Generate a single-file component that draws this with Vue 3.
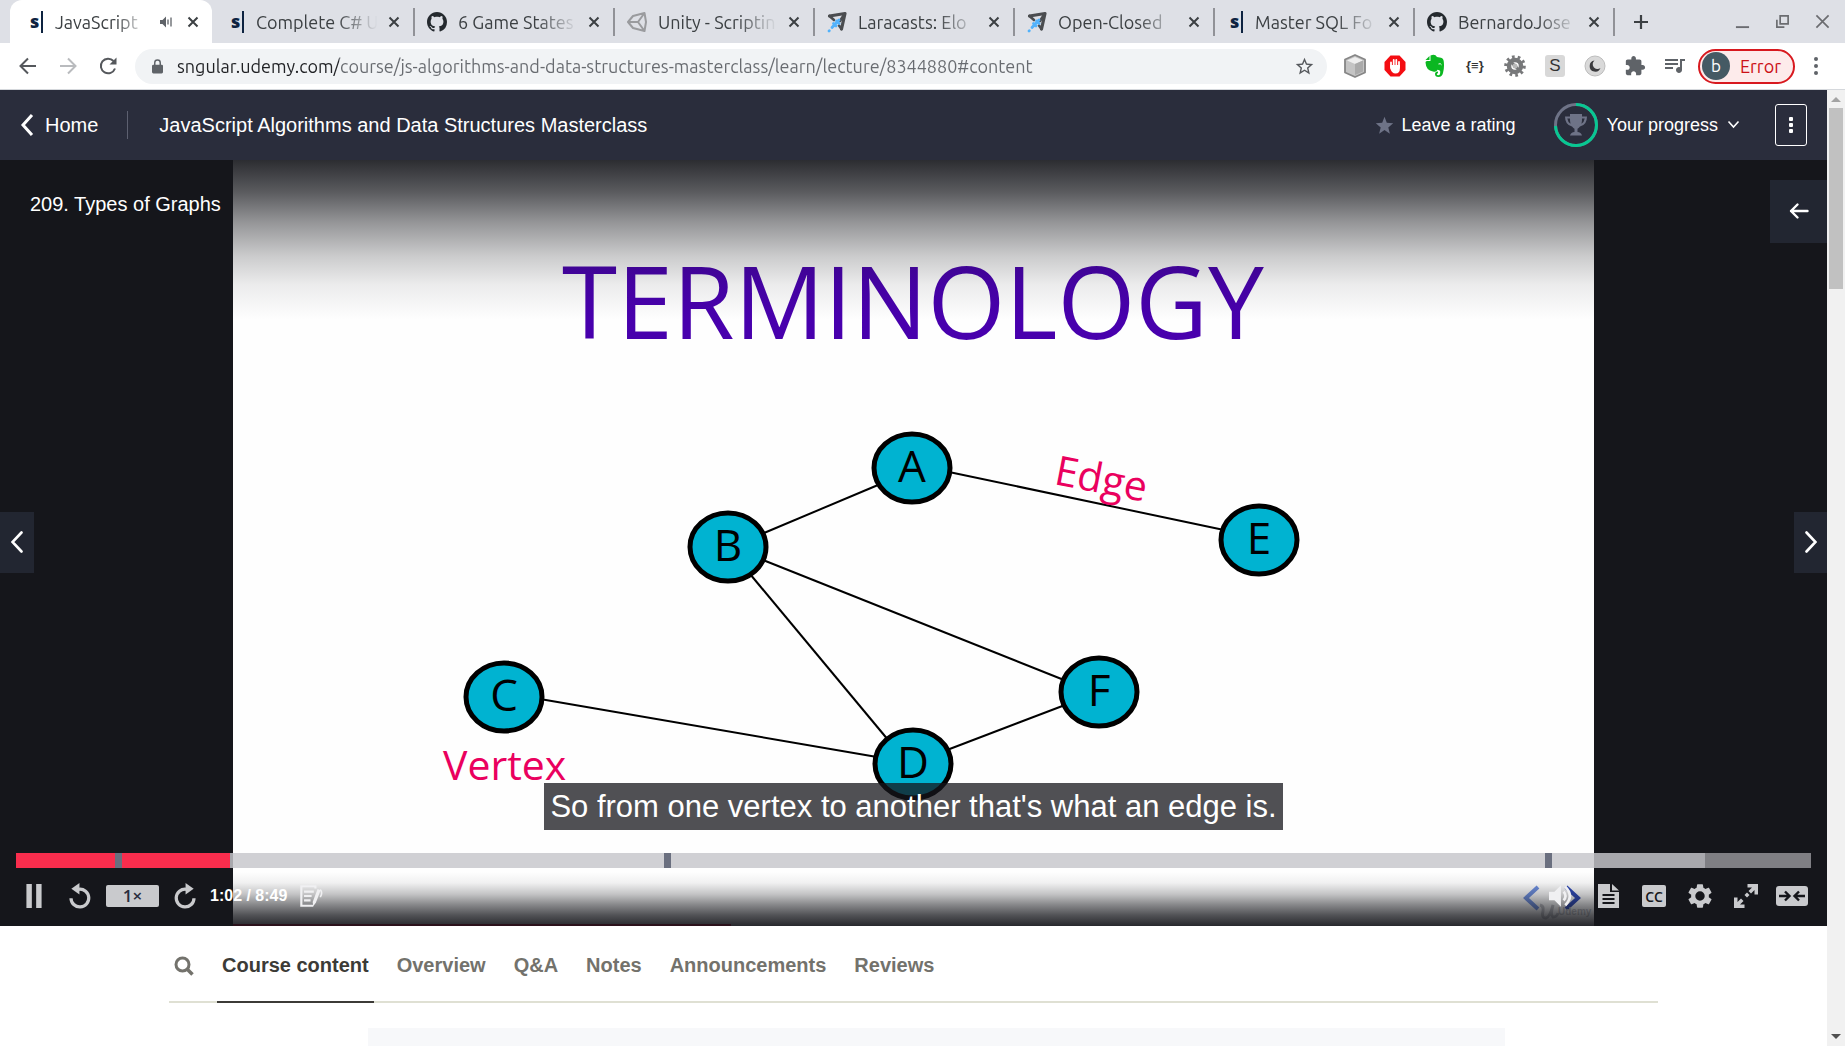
<script setup>
import { ref } from 'vue'

const tabs = [
  { title: 'JavaScript', icon: 'sngular', active: true, audible: true },
  { title: 'Complete C# U', icon: 'sngular' },
  { title: '6 Game States', icon: 'github' },
  { title: 'Unity - Scriptin', icon: 'unity' },
  { title: 'Laracasts: Elo', icon: 'plane' },
  { title: 'Open-Closed', icon: 'plane' },
  { title: 'Master SQL Fo', icon: 'sngular' },
  { title: 'BernardoJose', icon: 'github' },
]

const url = ref('sngular.udemy.com/course/js-algorithms-and-data-structures-masterclass/learn/lecture/8344880#content')

const nodes = [
  { name: 'A', x: 679, y: 308 },
  { name: 'B', x: 495, y: 387 },
  { name: 'C', x: 271, y: 537 },
  { name: 'D', x: 680, y: 604 },
  { name: 'E', x: 1026, y: 380 },
  { name: 'F', x: 866, y: 532 },
]
const edges = [
  { key: 'AB', from: [645, 325], to: [531, 373] },
  { key: 'AE', from: [716, 312], to: [991, 370] },
  { key: 'BF', from: [530, 400], to: [831, 520] },
  { key: 'BD', from: [517, 414], to: [656, 581] },
  { key: 'CD', from: [307, 539], to: [644, 597] },
  { key: 'DF', from: [714, 590], to: [832, 545] },
]

const position = ref(62)
const duration = 529
const played = 11.9
const buffered = 94.1
const bookmarks = [5.5, 36.1, 85.2]

const sections = ['Course content', 'Overview', 'Q&A', 'Notes', 'Announcements', 'Reviews']
const current = ref('Course content')
</script>

<template>
  <div class="browser">
    <div class="tabstrip">
      <div v-for="tab in tabs" :key="tab.title" class="tab" :class="{ active: tab.active }">
        <span v-if="tab.icon === 'sngular'" class="fav fav-s">s</span>
        <svg v-else-if="tab.icon === 'github'" class="fav" viewBox="0 0 16 16" fill="#24292e">
          <path d="M8 0C3.58 0 0 3.58 0 8c0 3.54 2.29 6.53 5.47 7.59.4.07.55-.17.55-.38 0-.19-.01-.82-.01-1.49-2.01.37-2.53-.49-2.69-.94-.09-.23-.48-.94-.82-1.13-.28-.15-.68-.52-.01-.53.63-.01 1.08.58 1.23.82.72 1.21 1.87.87 2.33.66.07-.52.28-.87.51-1.07-1.78-.2-3.64-.89-3.64-3.95 0-.87.31-1.59.82-2.15-.08-.2-.36-1.02.08-2.12 0 0 .67-.21 2.2.82.64-.18 1.32-.27 2-.27s1.36.09 2 .27c1.53-1.04 2.2-.82 2.2-.82.44 1.1.16 1.92.08 2.12.51.56.82 1.27.82 2.15 0 3.07-1.87 3.75-3.65 3.95.29.25.54.73.54 1.48 0 1.07-.01 1.93-.01 2.2 0 .21.15.46.55.38A8.01 8.01 0 0 0 16 8c0-4.42-3.58-8-8-8z" />
        </svg>
        <svg v-else-if="tab.icon === 'unity'" class="fav" viewBox="0 0 20 20" fill="none" stroke="#9a9b9e" stroke-width="2" stroke-linejoin="round">
          <path d="M1 10 6 4 17.500 1 19 10 17.500 19 6 16ZM1 10H11M11 10l6.500-9M11 10l6.500 9" />
        </svg>
        <svg v-else class="fav" viewBox="0 0 20 20" fill="none">
          <path d="M2.500 4 18 1.500 14.500 17" stroke="#4b4d50" stroke-width="3.200" stroke-linejoin="round" stroke-linecap="round" />
          <path d="M2.500 4 7 8M14.500 17 12 13.500M17.500 2 13 9" stroke="#4b4d50" stroke-width="2.600" stroke-linecap="round" />
          <path d="M12 8 5 15.500M6.500 11.500l2.500 2.500M9.500 9l2.500 2.500M2 19l.3-.3" stroke="#52b2fb" stroke-width="2.800" stroke-linecap="round" />
        </svg>
        <span class="tab-title">{{ tab.title }}</span>
        <svg v-if="tab.audible" class="audible" viewBox="0 0 14 14" fill="#5f6368">
          <path d="M1 5h2.500L7 1.500v11L3.500 9H1z" />
          <path d="M9 4.500v5M12 2.500v9" stroke="#5f6368" stroke-width="1.300" />
        </svg>
        <button class="tab-close" aria-label="Close tab">
          <svg viewBox="0 0 12 12"><path d="M1.500 1.500l9 9M10.500 1.500l-9 9" stroke="#3c4043" stroke-width="2" /></svg>
        </button>
      </div>
      <button class="new-tab" aria-label="New tab">
        <svg viewBox="0 0 16 16"><path d="M8 1v14M1 8h14" stroke="#3c4043" stroke-width="2.200" /></svg>
      </button>
      <div class="window-buttons">
        <button aria-label="Minimize"><svg viewBox="0 0 16 16"><path d="M1 14h14" stroke="#6b6c70" stroke-width="2" /></svg></button>
        <button aria-label="Restore"><svg viewBox="0 0 16 16" fill="none" stroke="#6b6c70" stroke-width="1.800"><path d="M5.500 2H14v8.500H5.500zM2 6v8h8" /></svg></button>
        <button aria-label="Close window"><svg viewBox="0 0 16 16"><path d="M1.500 1.500l13 13M14.500 1.500l-13 13" stroke="#6b6c70" stroke-width="1.800" /></svg></button>
      </div>
    </div>

    <div class="toolbar">
      <button class="nav-btn" aria-label="Back"><svg viewBox="0 0 20 20" fill="none" stroke="#55585c" stroke-width="2"><path d="M18 10H3M10 2.500 2.500 10l7.500 7.500" /></svg></button>
      <button class="nav-btn" aria-label="Forward"><svg viewBox="0 0 20 20" fill="none" stroke="#b9bbbe" stroke-width="2"><path d="M2 10h15M10 2.500 17.500 10 10 17.500" /></svg></button>
      <button class="nav-btn" aria-label="Reload"><svg viewBox="0 0 20 20" fill="none" stroke="#55585c" stroke-width="2"><path d="M17 12.500A7.300 7.300 0 1 1 15.500 5" /><path d="M18.500 1.500v7h-7z" fill="#55585c" stroke="none" /></svg></button>
      <div class="omnibox">
        <svg class="lock" viewBox="0 0 12 16"><rect y="6" width="12" height="9.500" rx="1.500" fill="#5f6368" /><path d="M3 6.500V4a3 3 0 0 1 6 0v2.500" fill="none" stroke="#5f6368" stroke-width="1.600" /></svg>
        <input v-model="url" class="url" type="text" aria-label="Address" spellcheck="false" />
        <button class="bookmark" aria-label="Bookmark this page"><svg viewBox="0 0 24 24" fill="#55585c"><path d="M22 9.240l-7.190-.62L12 2 9.190 8.630 2 9.240l5.460 4.730L5.820 21 12 17.270 18.180 21l-1.630-7.030L22 9.240zM12 15.400l-3.760 2.270 1-4.280-3.320-2.880 4.380-.38L12 6.100l1.710 4.040 4.380.38-3.320 2.880 1 4.280L12 15.400z" /></svg></button>
      </div>
      <div class="extensions">
        <button aria-label="Cube"><svg viewBox="0 0 22 24"><path d="M11 1 21 5.500v13L11 23 1 18.500v-13z" fill="#c4c4c4" stroke="#868686" stroke-width="1.800" stroke-linejoin="round" /><path d="M3 6.500 11 3l8 3.500-8 3.500z" fill="#eee" /><path d="M11 10l8-3.500v11L11 21z" fill="#aaa" /></svg></button>
        <button aria-label="Ad blocker"><svg viewBox="0 0 22 24"><path d="M6.500 1.500h9L21.500 8v8l-6 6.500h-9L.5 16V8z" fill="#f40d12" /><path d="M7 13V8.500M9.700 12V6M12.300 12V6M15 13V8" stroke="#fff" stroke-width="1.800" stroke-linecap="round" /><path d="M6.200 11h9.700v3.500q0 5-4.500 5-3.500 0-5.200-5z" fill="#fff" /></svg></button>
        <button aria-label="Web clipper"><svg viewBox="0 0 22 24"><path d="M6.500 1.500Q11-.5 13 3l4 .8q2.500.5 2.800 4 .7 6-.8 11.200Q18 23 14.500 23t-3.500-3q0-2.500 3-2.500v1.800q-1.200 0-1.200.9 0 1 1.600 1 2 0 1.800-4-.2-1.500-2.700-1.500-1 3-4.500 1.800Q2 16.500 1.500 8.500 1.500 7 3 7h3.500z" fill="#0bb721" /><path d="M1.500 6 5.500 2v4z" fill="#0bb721" /><path d="M14.500 10q2-1 3 .8" stroke="#fff" fill="none" /></svg></button>
        <button class="braces" aria-label="JSON viewer">{≡}</button>
        <button aria-label="Debugger"><svg viewBox="0 0 22 22"><circle cx="11" cy="11" r="6" fill="none" stroke="#77787a" stroke-width="4.500" /><circle cx="11" cy="11" r="9" fill="none" stroke="#77787a" stroke-width="3.600" stroke-dasharray="2.600 3" /><path d="M6 6l10 10" stroke="#77787a" stroke-width="3" /><circle cx="11" cy="11" r="2.500" fill="#b8b8b8" /></svg></button>
        <button class="stylus" aria-label="Styles">S</button>
        <button aria-label="Dark mode"><svg viewBox="0 0 22 22"><circle cx="11" cy="11" r="10" fill="#d9d9d9" stroke="#bdbdbd" /><path d="M10.500 5.500a5.600 5.600 0 1 0 6 7.500 4.700 4.700 0 0 1-6-7.500z" fill="#3b3b3e" /></svg></button>
        <button aria-label="Extensions"><svg viewBox="0 0 24 24" fill="#5f6368"><path d="M20.500 11H19V7c0-1.100-.9-2-2-2h-4V3.500C13 2.120 11.880 1 10.500 1S8 2.120 8 3.500V5H4c-1.100 0-1.990.9-1.990 2v3.800H3.500c1.490 0 2.700 1.210 2.700 2.700s-1.210 2.700-2.700 2.700H2V20c0 1.100.9 2 2 2h3.800v-1.500c0-1.490 1.210-2.700 2.700-2.700 1.490 0 2.700 1.210 2.700 2.700V22H17c1.100 0 2-.9 2-2v-4h1.500c1.380 0 2.500-1.120 2.500-2.500S21.880 11 20.500 11z" /></svg></button>
        <button aria-label="Media control"><svg viewBox="1 2 22 22" fill="#5f6368"><path d="M15 6H2v2h13V6zm0 4H2v2h13v-2zM2 16h8v-2H2v2zM17 6v8.180c-.31-.11-.65-.18-1-.18-1.660 0-3 1.340-3 3s1.340 3 3 3 3-1.340 3-3V8h3V6h-5z" /></svg></button>
      </div>
      <button class="profile"><span class="avatar">b</span>Error</button>
      <button class="menu" aria-label="Browser menu"><i></i><i></i><i></i></button>
    </div>

    <div class="viewport">
      <div class="page">
        <header class="course-bar">
          <a class="home" href="#home">
            <svg viewBox="0 0 14 24" fill="none" stroke="#fff" stroke-width="3"><path d="M12 2 3 12l9 10" /></svg>Home
          </a>
          <span class="rule"></span>
          <a class="course-name" href="#course">JavaScript Algorithms and Data Structures Masterclass</a>
          <button class="rating">
            <svg viewBox="0 0 24 24" fill="#6e7387"><path d="M12 17.800 5.200 22.300l2-7.900L1 9.100l8.100-.5L12 1l2.900 7.600 8.100.5-6.200 5.300 2 7.900z" /></svg>Leave a rating
          </button>
          <button class="progress">
            <svg class="ring" viewBox="0 0 44 44" fill="none">
              <circle cx="22" cy="22" r="20.500" stroke="#6e7387" stroke-width="3" />
              <path d="M22 1.500A20.500 20.500 0 1 1 1.500 23" stroke="#08c792" stroke-width="3" />
              <path d="M16 11h12v2.500h5q0 8.500-7 10-1.500 2-2.500 2.200V29q3.500 0 4.500 3.500H16q1-3.500 4.500-3.500v-3.300q-1-.2-2.500-2.200-7-1.500-7-10h5zM13.300 15.500q.7 4 3.200 5.300-.6-2.500-.5-5.300zM30.700 15.500H28q.1 2.800-.5 5.300 2.500-1.300 3.200-5.300z" fill="#6e7387" fill-rule="evenodd" />
            </svg>
            Your progress
            <svg class="chev" viewBox="0 0 12 12" fill="none" stroke="#fff" stroke-width="1.600"><path d="M1 2.500 6 8l5-5.500" /></svg>
          </button>
          <button class="more" aria-label="More options"><i></i><i></i><i></i></button>
        </header>

        <main class="player">
          <svg class="slide" viewBox="0 0 1361 766">
            <rect width="1361" height="766" fill="#fefefe" />
            <text class="slide-title" x="680" y="179">TERMINOLOGY</text>
            <line v-for="e in edges" :key="e.key" :x1="e.from[0]" :y1="e.from[1]" :x2="e.to[0]" :y2="e.to[1]" stroke="#000" stroke-width="2" />
            <g v-for="n in nodes" :key="n.name">
              <ellipse :cx="n.x" :cy="n.y" rx="38" ry="34" fill="#00b3d1" stroke="#000" stroke-width="5" />
              <text class="node-name" :x="n.x" :y="n.y + 14">{{ n.name }}</text>
            </g>
            <text class="note" x="210" y="620">Vertex</text>
            <text class="note" transform="translate(820 324) rotate(11)">Edge</text>
            <path d="M1305 727l-12 11 12 11" fill="none" stroke="#6d8fe0" stroke-width="4" />
            <path d="M1333 727l12 11-12 11" fill="none" stroke="#2b47b8" stroke-width="4" />
            <path d="M1307 745q4 1 3 6-2 7 3 7 4-1 7-13-3 10 0 12 4 0 5-4" fill="none" stroke="#c4c5c9" stroke-width="3" />
            <text class="mark" x="1325" y="755">Udemy</text>
          </svg>
          <div class="shade-top"></div>
          <div class="shade-bottom"></div>

          <h1 class="lecture">209. Types of Graphs</h1>
          <button class="side open" aria-label="Open course content"><svg viewBox="0 0 20 20" fill="none" stroke="#fff" stroke-width="2.400" stroke-linecap="round" stroke-linejoin="round"><path d="M18.500 10H2M8.500 3.500 2 10l6.500 6.500" /></svg></button>
          <button class="side prev" aria-label="Previous lecture"><svg viewBox="0 0 12 22" fill="none" stroke="#fff" stroke-width="2.600" stroke-linecap="round"><path d="M10.500 1.500 1.500 11l9 9.500" /></svg></button>
          <button class="side next" aria-label="Next lecture"><svg viewBox="0 0 12 22" fill="none" stroke="#fff" stroke-width="2.600" stroke-linecap="round"><path d="M1.500 1.500l9 9.500-9 9.500" /></svg></button>

          <div class="overlay">
            <p class="caption">So from one vertex to another that's what an edge is.</p>
            <div class="seek">
              <span class="buffered" :style="{ width: buffered + '%' }"></span>
              <span class="played" :style="{ width: played + '%' }"></span>
              <span v-for="b in bookmarks" :key="b" class="bookmark-pin" :style="{ left: b + '%' }"></span>
              <input v-model="position" type="range" min="0" :max="duration" aria-label="Seek" />
            </div>
            <div class="controls">
              <button aria-label="Pause"><svg viewBox="0 0 24 24"><path d="M5 1h5v22H5zM14 1h5v22h-5z" /></svg></button>
              <button aria-label="Rewind"><svg class="line" viewBox="0 0 24 24"><path d="M11 5.800a8.200 8.200 0 1 1-7.300 8.200" /><path d="M11.500 0v10.500L4 5.300z" fill="#c9cacd" stroke="none" /></svg></button>
              <button class="rate">1×</button>
              <button aria-label="Forward"><svg class="line" viewBox="0 0 24 24"><path d="M13 5.800a8.200 8.200 0 1 0 7.300 8.200" /><path d="M12.500 0v10.500L20 5.300z" fill="#c9cacd" stroke="none" /></svg></button>
              <span class="time">1:02 / 8:49</span>
              <button class="light" aria-label="Add note"><svg viewBox="0 0 24 24"><path d="M17 5V3H4v18h11M6.500 8h9M6.500 12h7M6.500 16h6" fill="none" stroke="#f0f0f2" stroke-width="2" /><path d="M14.500 17.500 19 5.500l2.800 1.200L17.500 18 15 21.500z" /><path d="M21.500 6q2.500 3 0 7" fill="none" stroke="#f0f0f2" stroke-width="1.500" /></svg></button>
              <span class="grow"></span>
              <button class="light" aria-label="Mute"><svg viewBox="0 0 24 24"><path d="M0 8h5l6-6v20l-6-6H0z" /><path d="M13.500 8q3.500 4 0 8M15 3.500q8.500 8.500 0 17" fill="none" stroke="#f0f0f2" stroke-width="2.400" /></svg></button>
              <button aria-label="Transcript"><svg viewBox="0 0 24 26"><path d="M2 1h12v8h9v16H2zM16 1l7 6.500h-7z" /><path d="M6.500 12h12M6.500 16h12M6.500 20h12" stroke="#15161b" stroke-width="1.800" /></svg></button>
              <button aria-label="Captions"><svg viewBox="0 0 26 24"><rect x="1" y="1" width="24" height="22" rx="2" /><text class="cc" x="13" y="18">CC</text></svg></button>
              <button aria-label="Settings"><svg viewBox="1 1 22 22"><path d="M19.430 12.980c.04-.32.07-.64.07-.98s-.03-.66-.07-.98l2.110-1.650c.19-.15.24-.42.12-.64l-2-3.460c-.12-.22-.39-.3-.61-.22l-2.490 1c-.52-.4-1.080-.73-1.690-.98l-.38-2.650C14.460 2.180 14.250 2 14 2h-4c-.25 0-.46.18-.49.42l-.38 2.650c-.61.25-1.170.59-1.690.98l-2.490-1c-.23-.09-.49 0-.61.22l-2 3.460c-.13.22-.07.49.12.64l2.110 1.650c-.04.32-.07.65-.07.98s.03.66.07.98l-2.110 1.650c-.19.15-.24.42-.12.64l2 3.460c.12.22.39.3.61.22l2.490-1c.52.4 1.080.73 1.690.98l.38 2.650c.03.24.24.42.49.42h4c.25 0 .46-.18.49-.42l.38-2.650c.61-.25 1.170-.59 1.690-.98l2.490 1c.23.09.49 0 .61-.22l2-3.460c.12-.22.07-.49-.12-.64l-2.110-1.650zM12 16a4 4 0 1 1 0-8 4 4 0 0 1 0 8z" /></svg></button>
              <button aria-label="Full screen"><svg viewBox="0 0 26 26"><path d="M14.500 1H25v10.500h-3.500V7L18 10.500 15.500 8 19 4.500h-4.500zM11.500 25H1V14.500h3.500V19L8 15.500l2.500 2.500L7 21.500h4.500zM11.500 12l2.500 2.500 2.500-2.500L14 9.500z" /></svg></button>
              <button class="wide" aria-label="Theater mode"><svg viewBox="0 0 32 20"><rect x="0" y="0" width="32" height="20" rx="3" /><path d="M3 10h10M9 5.500l4.500 4.500L9 14.500M29 10H19M23 5.500 18.500 10l4.500 4.500" fill="none" stroke="#15161b" stroke-width="2.400" /></svg></button>
            </div>
          </div>
          <div class="loaded"></div>
        </main>

        <nav class="sections">
          <button class="search" aria-label="Search course"><svg viewBox="0 0 20 20" fill="none" stroke="#73726c" stroke-width="3"><circle cx="8.500" cy="8.500" r="6.500" /><path d="M13 13l5.500 5.500" stroke-width="3.600" /></svg></button>
          <a v-for="s in sections" :key="s" :href="'#' + s" :class="{ on: s === current }" @click.prevent="current = s">{{ s }}</a>
        </nav>
        <section class="panel"></section>
      </div>
      <div class="scrollbar">
        <svg viewBox="0 0 18 18"><path d="M4 12l5-5 5 5z" fill="#a3a3a3" /></svg>
        <span class="thumb"></span>
        <svg class="down" viewBox="0 0 18 18"><path d="M4 6l5 5 5-5z" fill="#505050" /></svg>
      </div>
    </div>
  </div>
</template>

<style>
body { margin: 0; background: #fff; }
</style>

<style scoped>
.browser { min-height: 100vh; display: flex; flex-direction: column; font-family: "Liberation Sans", Arial, sans-serif; color: #fff; overflow: hidden; }
button { border: 0; background: none; padding: 0; margin: 0; font: inherit; color: inherit; display: flex; align-items: center; justify-content: center; flex: none; }
svg { display: block; flex: none; }
a { color: inherit; text-decoration: none; }

.tabstrip { height: 43px; background: #dee0e6; display: flex; align-items: center; padding-left: 14px; box-sizing: border-box; font-family: Ubuntu, "Noto Sans", sans-serif; font-size: 18px; color: #3c4043; }
.tab { width: 200px; height: 28px; box-sizing: border-box; padding: 0 13px 0 12px; display: flex; align-items: center; border-right: 2px solid #919297; }
.tab.active { width: 202px; height: 43px; margin: 0 0 0 -4px; padding: 0 13px 0 17px; background: #fff; border: 0; border-radius: 12px 12px 0 0; }
.tab.active + .tab { width: 203px; padding-left: 16px; }
.fav { width: 20px; height: 24px; margin-right: 11px; flex: none; }
.fav-s { width: 13px; height: 22px; margin-right: 12px; margin-left: 3px; box-sizing: border-box; border-right: 2px solid #0d2340; font: 800 18px/20px "Open Sans", sans-serif; color: #0d2340; }
.tab-title { flex: 1; min-width: 0; white-space: nowrap; line-height: 26px; mask-image: linear-gradient(to right, #000 65%, transparent 98%); }
.audible { width: 14px; height: 14px; margin: 0 14px 0 10px; }
.tab-close { margin-left: 8px; }
.audible + .tab-close { margin-left: 0; }
.tab-close svg { width: 12px; height: 12px; }
.new-tab { margin-left: 18px; }
.new-tab svg { width: 16px; height: 16px; }
.window-buttons { margin-left: auto; display: flex; padding-right: 3px; }
.window-buttons button { width: 40px; }
.window-buttons svg { width: 15px; height: 15px; }

.toolbar { height: 47px; box-sizing: border-box; padding: 0 8px; background: #fff; border-bottom: 1px solid #d5d8dc; display: flex; align-items: center; font-family: Ubuntu, "Noto Sans", sans-serif; }
.nav-btn { width: 40px; }
.nav-btn svg { width: 20px; height: 20px; }
.omnibox { flex: 1; height: 35px; margin-left: 7px; border-radius: 18px; background: #f1f3f5; display: flex; align-items: center; padding: 0 12px 0 17px; }
.lock { width: 11px; height: 15px; }
.url { flex: 1; min-width: 0; border: 0; outline: 0; margin-left: 14px; padding: 0; font: 18px/26px Ubuntu, "Noto Sans", sans-serif; color: transparent; background: linear-gradient(to right, #202124 162px, #686b70 0); background-clip: text; -webkit-background-clip: text; }
.bookmark svg { width: 21px; height: 21px; }
.extensions { display: flex; margin-left: 8px; }
.extensions button { width: 40px; height: 26px; }
.extensions svg { width: 22px; height: 24px; }
.extensions .braces { color: #333; font: bold 13px/24px "Liberation Sans", sans-serif; }
.extensions .stylus { width: 20px; height: 22px; margin: 2px 10px; border-radius: 3px; background: #d8d8d8; color: #333; font: 17px/22px "Liberation Sans", sans-serif; }
.profile { height: 35px; box-sizing: border-box; margin-left: 3px; padding: 0 12px 0 2px; gap: 10px; border: 2px solid #d8191f; border-radius: 18px; background: #fdebeb; color: #cc1016; font-size: 18px; }
.avatar { width: 28px; height: 28px; border-radius: 50%; background: #455a64; color: #fff; font-size: 17px; line-height: 27px; text-align: center; }
.menu { width: 42px; height: 26px; flex-direction: column; gap: 3px; }
.menu i { width: 4px; height: 4px; border-radius: 50%; background: #5f6368; }

.viewport { flex: 1; display: flex; }
.page { flex: 1; min-width: 0; background: #fff; display: flex; flex-direction: column; }
.scrollbar { width: 18px; background: #f1f1f1; display: flex; flex-direction: column; align-items: center; }
.scrollbar svg { width: 18px; height: 18px; }
.thumb { width: 14px; height: 181px; background: #c1c1c1; }
.down { margin-top: auto; }

.course-bar { height: 70px; box-sizing: border-box; padding: 0 20px; background: #2a2d3c; display: flex; align-items: center; font-size: 18px; }
.home { display: flex; align-items: center; gap: 11px; font-size: 20px; }
.home svg { width: 14px; height: 24px; }
.rule { width: 1px; height: 28px; margin: 0 31px 0 29px; background: #5d6070; }
.course-name { font-size: 20px; }
.rating { margin-left: auto; gap: 8px; }
.rating svg { width: 19px; height: 19px; }
.progress { margin-left: 38px; gap: 9px; }
.ring { width: 44px; height: 44px; }
.chev { width: 13px; height: 12px; }
.more { width: 32px; height: 42px; margin-left: 35px; box-sizing: border-box; border: 1px solid #fff; border-radius: 3px; flex-direction: column; gap: 2px; }
.more i { width: 4px; height: 4px; border-radius: 1px; background: #fff; }

.player { position: relative; background: #15161b; padding: 0 233px; }
.slide { width: 100%; height: auto; font-family: "Open Sans", "Noto Sans", sans-serif; }
.slide-title { font-size: 100px; fill: #4800ad; text-anchor: middle; }
.node-name { font-size: 44px; fill: #000; text-anchor: middle; }
.note { font-size: 41px; fill: #ea005e; }
.mark { font: bold 10px "Liberation Sans", sans-serif; fill: #c4c5c9; }
.shade-top { position: absolute; inset: 0 0 auto; height: 160px; background: linear-gradient(rgba(21,22,27,.9), rgba(21,22,27,.7) 20%, rgba(21,22,27,.45) 39%, rgba(21,22,27,.22) 60%, rgba(21,22,27,.08) 78%, rgba(21,22,27,0)); }
.shade-bottom { position: absolute; inset: auto 0 0; height: 54px; background: linear-gradient(rgba(21,22,27,0), rgba(21,22,27,.06) 20%, rgba(21,22,27,.25) 41%, rgba(21,22,27,.5) 60%, rgba(21,22,27,.74) 80%, rgba(21,22,27,.92)); }
.loaded { position: absolute; left: 233px; right: 60%; bottom: 0; height: 2px; background: #2b111b; }
.lecture { position: absolute; left: 30px; top: 32px; margin: 0; font-size: 20px; line-height: 24px; font-weight: 400; }
.side { position: absolute; background: #222631; padding-bottom: 2px; }
.open { right: 0; top: 20px; width: 57px; height: 63px; }
.open svg { width: 20px; height: 20px; }
.prev, .next { top: 46%; height: 61px; }
.prev { left: 0; width: 34px; }
.next { right: 0; width: 33px; }
.prev svg, .next svg { width: 12px; height: 22px; }

.overlay { position: absolute; inset: auto 0 0; display: flex; flex-direction: column; align-items: center; }
.caption { margin: 0 0 23px; padding: 0 6px; background: rgba(21,22,27,.75); font-size: 31px; line-height: 47px; }
.seek { position: relative; align-self: stretch; height: 15px; margin: 0 16px; background: rgba(198,199,204,.6); }
.seek span { position: absolute; top: 0; bottom: 0; left: 0; }
.seek .buffered { background: rgba(198,199,204,.58); }
.seek .played { background: #f92d4d; }
.seek .bookmark-pin { width: 7px; background: #6a6f7f; }
.seek input { position: absolute; inset: 0; width: 100%; margin: 0; opacity: 0; }
.controls { align-self: stretch; height: 58px; box-sizing: border-box; padding: 0 12px 2px 11px; display: flex; align-items: center; }
.controls button { width: 46px; height: 30px; }
.controls svg { width: 26px; height: 26px; fill: #c9cacd; }
.controls .light svg { fill: #f0f0f2; }
.controls .line { fill: none; stroke: #c9cacd; stroke-width: 3; }
.controls .rate { width: 53px; height: 22px; margin: 0 3px; border-radius: 2px; background: #c9cacd; color: #2a2d3c; font: 600 17px/22px "Open Sans", sans-serif; }
.controls .wide svg { width: 32px; height: 22px; }
.cc { font: 600 14px "Open Sans", sans-serif; fill: #15161b; text-anchor: middle; }
.time { margin-left: 2px; font-size: 16px; font-weight: 700; white-space: nowrap; }
.grow { flex: 1; }

.sections { margin: 0 169px; height: 77px; box-sizing: border-box; border-bottom: 2px solid #dfe0d3; display: flex; align-items: stretch; gap: 18px; color: #73726c; font-size: 20px; font-weight: 700; }
.sections a { padding: 0 5px; line-height: 78px; height: 75px; border-bottom: 2px solid transparent; white-space: nowrap; }
.sections a.on { color: #3c3b37; border-color: #3c3b37; }
.search { width: 30px; height: 80px; }
.search svg { width: 20px; height: 20px; }
.panel { flex: 1; margin: 25px 322px 0 368px; background: #f7f8fa; }
</style>
